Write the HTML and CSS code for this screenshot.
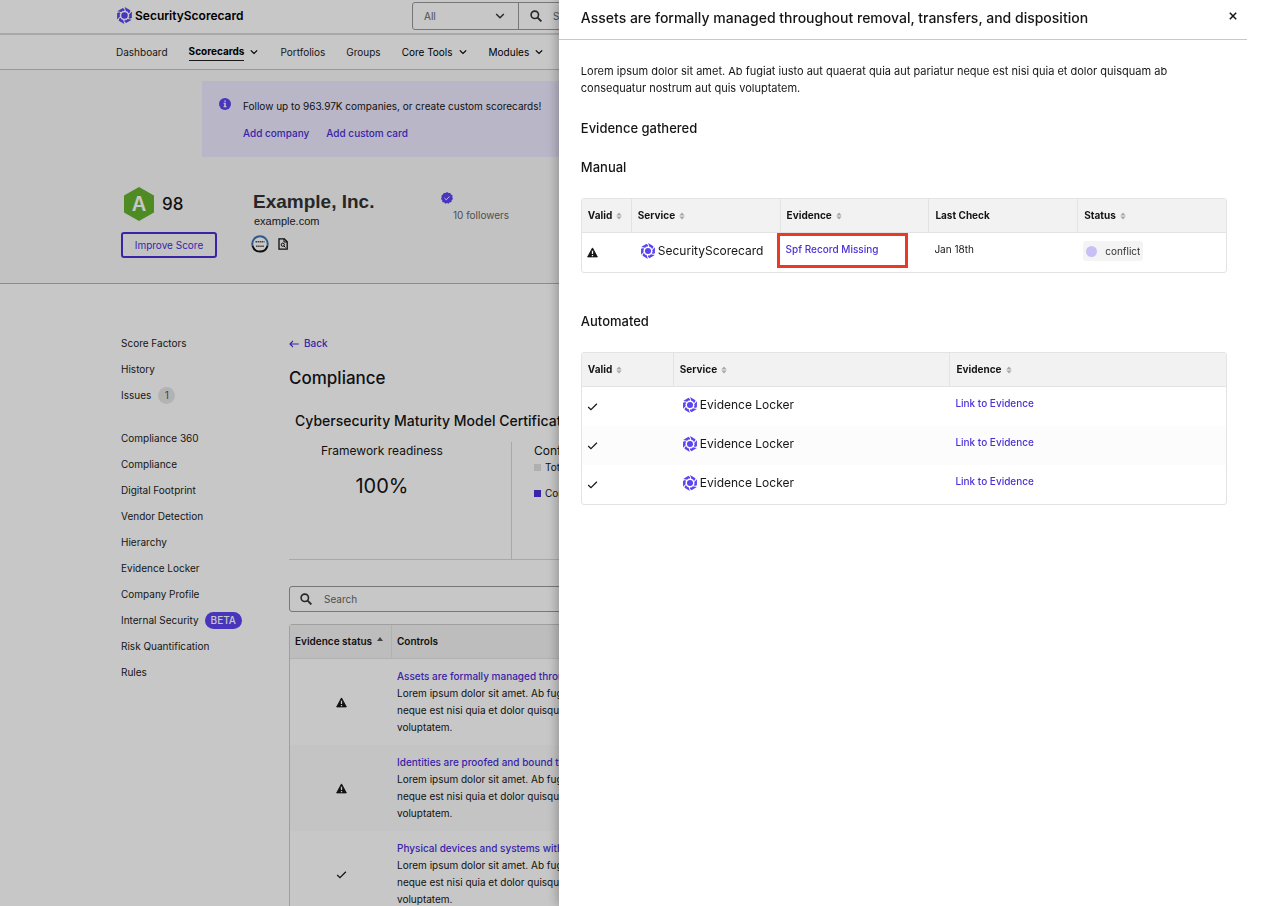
FILE: index.html
```html
<!DOCTYPE html>
<html lang="en">
<head>
<meta charset="utf-8">
<title>SecurityScorecard – Compliance</title>
<link rel="stylesheet" href="styles.css">
</head>
<body>
<svg class="sprite" aria-hidden="true">
  <symbol id="logo" viewBox="-12 -12 24 24">
    <circle r="4.5"/>
    <g id="blade"><path d="M.2-11.9L8.200-7.300 7.300-3.800 5.200-3.700 4.600-5.300 2-6.200z"/></g>
    <use href="#blade" transform="rotate(60)"/><use href="#blade" transform="rotate(120)"/>
    <use href="#blade" transform="rotate(180)"/><use href="#blade" transform="rotate(240)"/>
    <use href="#blade" transform="rotate(300)"/>
  </symbol>
  <symbol id="warn" viewBox="0 0 12 12"><path d="M6 1L11.3 10.8H.7z" stroke="currentColor" stroke-linejoin="round"/><path d="M5.3 4.2h1.4v3.4H5.3zM5.3 8.6h1.4V10H5.3z" fill="#fff"/></symbol>
  <symbol id="check" viewBox="0 0 12 12"><path d="M1.3 6.6L4.3 9.4 10.8 3" fill="none" stroke="currentColor" stroke-width="1.3"/></symbol>
  <symbol id="chev" viewBox="0 0 10 10"><path d="M1.8 3.4L5 6.5 8.2 3.4" fill="none" stroke="currentColor" stroke-width="1.2"/></symbol>
  <symbol id="mag" viewBox="0 0 12 12"><circle cx="4.8" cy="4.8" r="3.7" fill="none" stroke="currentColor" stroke-width="1.6"/><path d="M7.6 7.6L11.4 11.4" stroke="currentColor" stroke-width="1.9"/></symbol>
  <symbol id="sort" viewBox="0 0 6 8"><path d="M3 .4L5.7 3.4H.3zM3 7.6L5.7 4.6H.3z"/></symbol>
</svg>

<div class="app">
  <header class="topbar">
    <a class="brand" href="#"><svg class="brand-mark"><use href="#logo"/></svg>SecurityScorecard</a>
    <form class="global-search">
      <div class="scope">
        <select aria-label="Search scope"><option>All</option></select>
        <svg class="scope-chev"><use href="#chev"/></svg>
      </div>
      <svg class="mag"><use href="#mag"/></svg>
      <input type="search" aria-label="Search" placeholder="Search for any company">
    </form>
  </header>
  <nav class="nav" aria-label="Main">
    <a href="#">Dashboard</a>
    <a href="#" class="on"><span>Scorecards</span><svg><use href="#chev"/></svg></a>
    <a href="#">Portfolios</a>
    <a href="#">Groups</a>
    <a href="#" class="dark">Core Tools<svg><use href="#chev"/></svg></a>
    <a href="#" class="dark">Modules<svg><use href="#chev"/></svg></a>
  </nav>

  <section class="hero">
    <div class="banner">
      <svg class="info" viewBox="0 0 12 12"><circle cx="6" cy="6" r="6"/><path d="M5.3 2.4h1.5v1.4H5.3zM4.6 4.8h2.2v3.5h.8v1H4.5v-1h.8V5.8h-.7z" fill="#fff"/></svg>
      <div>
        <p>Follow up to 963.97K companies, or create custom scorecards!</p>
        <div class="banner-links"><a href="#">Add company</a><a href="#">Add custom card</a></div>
      </div>
    </div>
    <div class="company">
      <div class="score">
        <div class="grade">
          <svg class="hex" viewBox="0 0 32 36" role="img" aria-label="Grade A"><path d="M16 1L31 9.5V26.500L16 35 1 26.500V9.500z" fill="#65b22e"/><text x="16" y="25" text-anchor="middle">A</text></svg>
          <span class="points">98</span>
        </div>
        <button class="improve" type="button">Improve Score</button>
      </div>
      <div class="ident">
        <h1>Example, Inc.</h1>
        <p>example.com</p>
        <div class="badges">
          <svg class="seal" viewBox="0 0 18 18"><circle cx="9" cy="9" r="7.7" fill="#fff"/><path d="M1.600 11A7.700 7.700 0 1 1 16.400 11" fill="none" stroke="#3b78b5" stroke-width="2"/><path d="M1.600 11A7.700 7.700 0 0 0 16.400 11" fill="none" stroke="#111" stroke-width="2"/><path d="M4.500 6.800h9M5 11.200h8" stroke="#555" stroke-width="1.600" stroke-dasharray="1.600 .5"/></svg>
          <svg class="doc" viewBox="0 0 10 12"><path d="M1 .8h5.300L9.200 3.700v7.500H1z" fill="none" stroke="#111" stroke-width="1.300"/><path d="M6 .8v3.200h3" fill="none" stroke="#111"/><circle cx="4.800" cy="6.700" r="1.600" fill="none" stroke="#111"/><path d="M6 8L7.500 9.500" stroke="#111"/></svg>
        </div>
      </div>
      <div class="follow">
        <svg class="verified" viewBox="0 0 12 12"><path d="M6 0l1.500 1L9.300.9l.7 1.700 1.600.9L11.300 5.300 12 7l-1.300 1.300-.3 1.800-1.800.3L7.500 11.800 6 11l-1.600.8-1.200-1.400-1.800-.3-.2-1.800L0 7l.7-1.700L.4 3.500 2 2.600 2.700.9 4.500 1z"/><path d="M3.500 6.100l1.800 1.700 3.200-3.400" fill="none" stroke="#fff"/></svg>
        <span>10 followers</span>
      </div>
    </div>
  </section>

  <div class="body">
    <nav class="side" aria-label="Scorecard">
      <div class="group">
        <a href="#">Score Factors</a><a href="#">History</a><a href="#">Issues<span class="count">1</span></a>
      </div>
      <div class="group">
        <a href="#">Compliance 360</a><a href="#">Compliance</a><a href="#">Digital Footprint</a><a href="#">Vendor Detection</a><a href="#">Hierarchy</a><a href="#">Evidence Locker</a><a href="#">Company Profile</a><a href="#">Internal Security<span class="beta">BETA</span></a><a href="#">Risk Quantification</a><a href="#">Rules</a>
      </div>
    </nav>
    <main class="main">
      <a class="back" href="#"><svg viewBox="0 0 10 8"><path d="M4 .8L1 4l3 3.200M1 4h8.800" fill="none" stroke="currentColor" stroke-width="1.200"/></svg>Back</a>
      <h2>Compliance</h2>
      <h3>Cybersecurity Maturity Model Certification</h3>
      <div class="stats">
        <div class="ready"><p>Framework readiness</p><strong>100%</strong></div>
        <div class="conf">
          <p>Conformity</p>
          <ul><li>Total controls</li><li class="done">Conforming</li></ul>
        </div>
      </div>
      <label class="filter"><svg class="mag"><use href="#mag"/></svg><input type="search" aria-label="Search controls" placeholder="Search"></label>
      <table class="controls">
        <thead><tr><th class="c-status">Evidence status<svg class="asc" viewBox="0 0 6 4"><path d="M3 0L6 4H0z"/></svg></th><th>Controls</th></tr></thead>
        <tbody>
          <tr><td class="mid"><svg class="ico"><use href="#warn"/></svg></td><td><a href="#">Assets are formally managed throughout removal, transfers, and disposition</a><p>Lorem ipsum dolor sit amet. Ab fugiat iusto aut<br>neque est nisi quia et dolor quisquam ab<br>voluptatem.</p></td></tr>
          <tr><td class="mid"><svg class="ico"><use href="#warn"/></svg></td><td><a href="#">Identities are proofed and bound to credentials</a><p>Lorem ipsum dolor sit amet. Ab fugiat iusto aut<br>neque est nisi quia et dolor quisquam ab<br>voluptatem.</p></td></tr>
          <tr><td class="mid"><svg class="ico"><use href="#check"/></svg></td><td><a href="#">Physical devices and systems within the organization</a><p>Lorem ipsum dolor sit amet. Ab fugiat iusto aut<br>neque est nisi quia et dolor quisquam ab<br>voluptatem.</p></td></tr>
        </tbody>
      </table>
    </main>
  </div>
</div>

<div class="backdrop"></div>

<aside class="drawer" role="dialog" aria-labelledby="drawer-title">
  <header class="drawer-head">
    <h2 id="drawer-title">Assets are formally managed throughout removal, transfers, and disposition</h2>
    <button type="button" class="close" aria-label="Close"><svg viewBox="0 0 8 8"><path d="M.8.8l6.400 6.400M7.200.8L.8 7.200" stroke="currentColor" stroke-width="1.500"/></svg></button>
  </header>
  <div class="drawer-body">
    <p class="lead">Lorem ipsum dolor sit amet. Ab fugiat iusto aut quaerat quia aut pariatur neque est nisi quia et dolor quisquam ab consequatur nostrum aut quis voluptatem.</p>
    <h3>Evidence gathered</h3>
    <h3>Manual</h3>
    <table class="grid manual">
      <colgroup><col class="narrow"><col><col><col><col></colgroup>
      <thead><tr><th>Valid<svg class="sort"><use href="#sort"/></svg></th><th>Service<svg class="sort"><use href="#sort"/></svg></th><th>Evidence<svg class="sort"><use href="#sort"/></svg></th><th>Last Check</th><th>Status<svg class="sort"><use href="#sort"/></svg></th></tr></thead>
      <tbody><tr>
        <td><svg class="ico"><use href="#warn"/></svg></td>
        <td><span class="svc"><svg><use href="#logo"/></svg>SecurityScorecard</span></td>
        <td class="marked"><a href="#">Spf Record Missing</a></td>
        <td>Jan 18th</td>
        <td><span class="chip">conflict</span></td>
      </tr></tbody>
    </table>
    <h3>Automated</h3>
    <table class="grid">
      <colgroup><col class="wide"><col><col></colgroup>
      <thead><tr><th>Valid<svg class="sort"><use href="#sort"/></svg></th><th>Service<svg class="sort"><use href="#sort"/></svg></th><th>Evidence<svg class="sort"><use href="#sort"/></svg></th></tr></thead>
      <tbody>
        <tr><td><svg class="ico"><use href="#check"/></svg></td><td><span class="svc"><svg><use href="#logo"/></svg>Evidence Locker</span></td><td><a href="#">Link to Evidence</a></td></tr>
        <tr><td><svg class="ico"><use href="#check"/></svg></td><td><span class="svc"><svg><use href="#logo"/></svg>Evidence Locker</span></td><td><a href="#">Link to Evidence</a></td></tr>
        <tr><td><svg class="ico"><use href="#check"/></svg></td><td><span class="svc"><svg><use href="#logo"/></svg>Evidence Locker</span></td><td><a href="#">Link to Evidence</a></td></tr>
      </tbody>
    </table>
  </div>
</aside>
</body>
</html>
```

FILE: styles.css
```css
:root {
  --purple: #4a2fd8;
  --mark: #5b45f0;
  --ink: #151515;
  --line: #e3e3e3;
}
*, *::before, *::after { box-sizing: border-box; }
body {
  margin: 0;
  height: 100vh;
  overflow: hidden;
  font: 10px/17px Inter, "Liberation Sans", sans-serif;
  color: var(--ink);
  background: #fff;
}
h1, h2, h3, p, ul { margin: 0; padding: 0; font-weight: 400; }
a { color: var(--purple); text-decoration: none; }
svg { flex: none; fill: currentColor; }
input, select, button { font: inherit; color: inherit; border: 0; background: none; padding: 0; }
input::placeholder { color: #666; opacity: 1; }
.sprite { position: absolute; width: 0; height: 0; }
.ico { width: 11px; height: 11px; }
.mag { width: 12px; height: 12px; color: #333; }

.topbar {
  display: flex;
  align-items: flex-start;
  height: 35px;
  padding: 2px 0 0 116px;
  border-bottom: 2px solid #d8d8d8;
}
.brand {
  display: flex;
  align-items: center;
  gap: 2px;
  width: 296px;
  height: 27px;
  color: #000;
  font-size: 12px;
  font-weight: 600;
}
.brand-mark { width: 17px; height: 17px; color: var(--mark); }
.global-search {
  display: flex;
  flex: 1;
  align-items: center;
  height: 28px;
  border: 1px solid #999;
  border-radius: 3px;
}
.scope {
  display: flex;
  align-items: center;
  width: 106px;
  height: 100%;
  margin-right: 11px;
  padding: 0 12px 0 11px;
  border-right: 1px solid #999;
}
.scope select { flex: 1; appearance: none; color: #666; }
.scope-chev { width: 12px; height: 12px; color: #333; }
.global-search input { flex: 1; padding-left: 11px; }

.nav {
  display: flex;
  align-items: center;
  gap: 21px;
  height: 35px;
  padding-left: 116px;
  border-bottom: 1px solid #c4c4c4;
}
.nav a { display: flex; align-items: center; gap: 5px; color: #222; }
.nav .dark { color: #000; }
.nav .on { font-weight: 700; color: #000; }
.nav .on span { border-bottom: 1px solid #222; }
.nav svg { width: 10px; height: 10px; }

.hero {
  height: 214px;
  padding: 11px 0 0 121px;
  background: #f9f9f9;
  border-bottom: 1px solid #b4b4b4;
}
.banner {
  display: flex;
  gap: 12px;
  margin-left: 81px;
  height: 76px;
  padding: 17px;
  background: #ede9ff;
}
.info { width: 12px; height: 12px; color: var(--mark); }
.banner-links { display: flex; gap: 17px; margin-top: 10px; font-weight: 500; }
.company { display: flex; padding-top: 28px; }
.score { width: 130px; }
.grade { display: flex; align-items: center; gap: 7px; height: 38px; padding-left: 2px; }
.hex { width: 32px; height: 36px; }
.hex text { font: 600 20px Inter, sans-serif; fill: #fff; }
.points { font-size: 17px; font-weight: 500; }
.improve {
  margin-top: 9px;
  width: 96px;
  height: 26px;
  border: 2px solid var(--purple);
  border-radius: 3px;
  color: var(--purple);
}
.ident { width: 190px; font-family: "Liberation Sans", Arial, sans-serif; font-size: 11px; }
.ident h1 { padding-left: 2px; font-size: 19px; line-height: 24px; font-weight: 700; color: #333; margin-top: 5px; }
.ident p { padding-left: 3px; line-height: 14px; color: #222; }
.badges { display: flex; align-items: center; gap: 9px; margin-top: 7px; }
.seal { width: 18px; height: 18px; }
.doc { width: 10px; height: 12px; }
.follow { display: flex; flex-direction: column; padding-top: 7px; color: #666; }
.follow span { margin-top: 3px; padding-left: 12px; }
.verified { width: 12px; height: 12px; color: var(--mark); }

.body { display: flex; padding: 46px 0 0 121px; }
.side { width: 168px; }
.group { margin-bottom: 17px; }
.side a { display: flex; align-items: center; height: 26px; color: #222; }
.count {
  margin-left: 7px;
  width: 17px;
  border-radius: 9px;
  background: #e6e6e6;
  text-align: center;
  color: #555;
}
.beta {
  margin-left: 6px;
  padding: 0 6px;
  border-radius: 9px;
  background: var(--mark);
  color: #fff;
  font-weight: 500;
}
.main { flex: 1; padding-top: 5px; }
.back { display: flex; align-items: center; gap: 5px; font-weight: 500; }
.back svg { width: 10px; height: 8px; }
.main h2 { margin-top: 14px; font-size: 17px; line-height: 24px; font-weight: 500; }
.main h3 { margin: 20px 0 10px 6px; font-size: 14px; line-height: 22px; font-weight: 500; white-space: nowrap; }
.stats { display: flex; height: 118px; border-bottom: 1px solid #d8d8d8; }
.ready { width: 223px; padding-right: 36px; border-right: 1px solid #d8d8d8; text-align: center; font-size: 12px; }
.ready strong { display: block; margin-top: 14px; font-size: 20px; line-height: 26px; font-weight: 400; }
.conf { padding-left: 22px; font-size: 12px; }
.conf ul { list-style: none; font-size: 10px; }
.conf li { display: flex; align-items: center; gap: 4px; margin-bottom: 9px; }
.conf li::before { content: ""; width: 7px; height: 7px; background: #e0e0e0; }
.conf .done::before { background: var(--purple); }
.filter {
  display: flex;
  align-items: center;
  gap: 12px;
  height: 26px;
  margin: 26px 0 12px;
  padding-left: 10px;
  border: 1px solid #999;
  border-radius: 3px;
}
.filter input { flex: 1; }
.controls { width: 100%; border-collapse: separate; border-spacing: 0; border: 1px solid #ccc; border-radius: 3px; }
.controls th { height: 34px; padding: 0 5px; background: #f2f2f2; border-bottom: 1px solid var(--line); text-align: left; font-weight: 600; font-size: 10px; white-space: nowrap; }
.c-status { width: 102px; border-right: 1px solid var(--line); }
.asc { width: 6px; height: 4px; margin-left: 5px; vertical-align: 4px; color: #555; }
.controls td { padding: 9px 5px; vertical-align: top; white-space: nowrap; font-size: 10px; }
.controls a { display: block; font-weight: 500; }
.controls .mid { text-align: center; vertical-align: middle; }
.controls .mid svg { display: block; margin: auto; }
.controls tr:nth-child(even) td { background: #fcfcfc; }

.backdrop { position: fixed; inset: 0; background: rgba(0, 0, 0, .22); }

.drawer {
  position: fixed;
  inset: 0 0 0 auto;
  width: 56%;
  background: #fff;
  box-shadow: 0 0 12px rgba(0, 0, 0, .35);
}
.drawer-head {
  display: flex;
  justify-content: space-between;
  height: 40px;
  margin-right: 23px;
  padding: 7px 10px 0 22px;
  border-bottom: 1px solid #c8c8c8;
}
.drawer-head h2 { font-size: 14px; line-height: 22px; font-weight: 500; }
.close { display: flex; height: 17px; align-items: center; }
.close svg { width: 8px; height: 8px; }
.drawer-body { padding: 23px 43px 0 22px; }
.lead { margin-bottom: 21px; font-size: 11px; }
.drawer h3 { margin-bottom: 19px; font-size: 13px; line-height: 20px; font-weight: 500; }
.grid { width: 100%; table-layout: fixed; border-collapse: separate; border-spacing: 0; border: 1px solid var(--line); border-radius: 3px; }
.drawer h3 + .grid { margin-top: 21px; }
.narrow { width: 49px; }
.wide { width: 91px; }
.grid th { height: 34px; padding: 0 0 0 6px; text-align: left; background: #f2f2f2; border-bottom: 1px solid var(--line); font-weight: 700; font-size: 10px; }
.grid th + th { border-left: 1px solid var(--line); }
.grid td { height: 39px; padding: 8px 0 0 6px; vertical-align: top; font-size: 10px; }
.grid td:first-child { padding-left: 5px; }
.grid a { font-weight: 500; }
.grid tr:nth-child(even) td { background: #fcfcfc; }
.sort { width: 6px; height: 8px; margin-left: 4px; vertical-align: -1px; color: #a8a8a8; }
.grid .ico { display: block; margin-top: 6px; }
.svc { display: flex; align-items: center; gap: 2px; padding: 1px 0 0 3px; font-size: 12px; }
.svc svg { width: 16px; height: 16px; color: var(--mark); }
.manual { margin-bottom: 38px; }
.marked { position: relative; }
.marked::after {
  content: "";
  position: absolute;
  left: -3px;
  top: 0;
  width: 131px;
  height: 35px;
  border: 3px solid #ea3a24;
}
.chip {
  display: inline-flex;
  align-items: center;
  gap: 8px;
  height: 20px;
  padding: 0 3px;
  border-radius: 3px;
  background: #f4f4f4;
  color: #333;
}
.chip::before { content: ""; width: 11px; height: 11px; border-radius: 50%; background: #c9bff7; }
```
